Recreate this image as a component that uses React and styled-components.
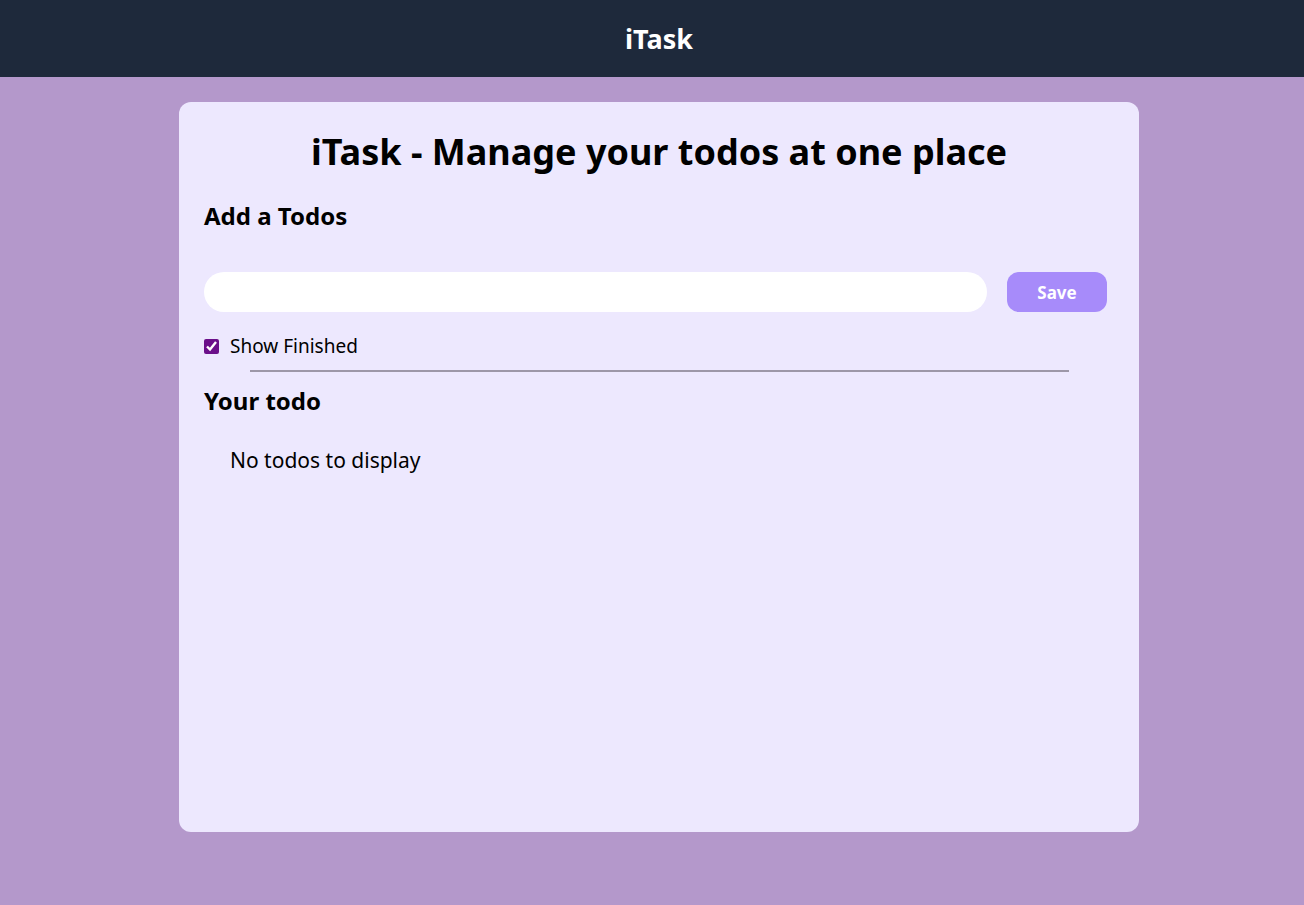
import styled, { createGlobalStyle } from "styled-components";
import { useState } from "react";

const GlobalStyle = createGlobalStyle`
  * {
    box-sizing: border-box;
  }
  body {
    margin: 0;
    background-color: #b498cb;
    font-family: "Noto Sans", "Open Sans", sans-serif;
    color: #000000;
  }
`;

const Nav = styled.nav`
  height: 77px;
  padding-left: 14px;
  background-color: #1e293b;
  color: #ffffff;
  display: flex;
  align-items: center;
  justify-content: center;
`;

const Logo = styled.span`
  font-size: 27px;
  font-weight: bold;
`;

const Page = styled.div`
  padding-left: 14px;
  display: flex;
  justify-content: center;
`;

const Card = styled.main`
  width: 960px;
  min-height: 730px;
  margin: 25px 0;
  padding: 20px 25px;
  background-color: #ede8fe;
  border-radius: 12px;
`;

const Title = styled.h1`
  margin: 0;
  text-align: center;
  font-size: 36px;
  line-height: 60px;
  font-weight: bold;
`;

const SectionTitle = styled.h2`
  margin: ${({ $top }) => $top || "0"} 0 0;
  font-size: 24px;
  line-height: 32px;
  font-weight: bold;
`;

const AddRow = styled.div`
  display: flex;
  gap: 20px;
  margin-top: 40px;
  margin-right: 7px;
`;

const TodoInput = styled.input`
  flex: 1;
  height: 40px;
  border: none;
  border-radius: 999px;
  background-color: #ffffff;
  padding: 0 16px;
  font-size: 18px;
  outline: none;
`;

const SaveButton = styled.button`
  width: 100px;
  height: 40px;
  border: none;
  border-radius: 12px;
  background-color: #a78bfa;
  color: #ffffff;
  font-family: inherit;
  font-size: 17px;
  font-weight: bold;
  cursor: pointer;
`;

const FinishedLabel = styled.label`
  display: flex;
  align-items: center;
  gap: 11px;
  margin-top: 22px;
  font-size: 19px;
  line-height: 24px;

  input {
    margin: 0;
    width: 15px;
    height: 15px;
    accent-color: #6b0f8a;
  }
`;

const Divider = styled.div`
  width: 90%;
  height: 2px;
  margin: 12px auto 0;
  background-color: #9d97a8;
`;

const EmptyText = styled.p`
  margin: 29px 0 0 26px;
  font-size: 21px;
  line-height: 28px;
`;

const App = () => {
  const [todo, setTodo] = useState("");
  const [showFinished, setShowFinished] = useState(true);

  return (
    <>
      <GlobalStyle />
      <Nav>
        <Logo>iTask</Logo>
      </Nav>
      <Page>
        <Card>
          <Title>iTask - Manage your todos at one place</Title>
          <SectionTitle $top="18px">Add a Todos</SectionTitle>
          <AddRow>
            <TodoInput value={todo} onChange={(e) => setTodo(e.target.value)} />
            <SaveButton>Save</SaveButton>
          </AddRow>
          <FinishedLabel>
            <input
              type="checkbox"
              checked={showFinished}
              onChange={() => setShowFinished(!showFinished)}
            />
            Show Finished
          </FinishedLabel>
          <Divider />
          <SectionTitle $top="13px">Your todo</SectionTitle>
          <EmptyText>No todos to display</EmptyText>
        </Card>
      </Page>
    </>
  );
};

export default App;
